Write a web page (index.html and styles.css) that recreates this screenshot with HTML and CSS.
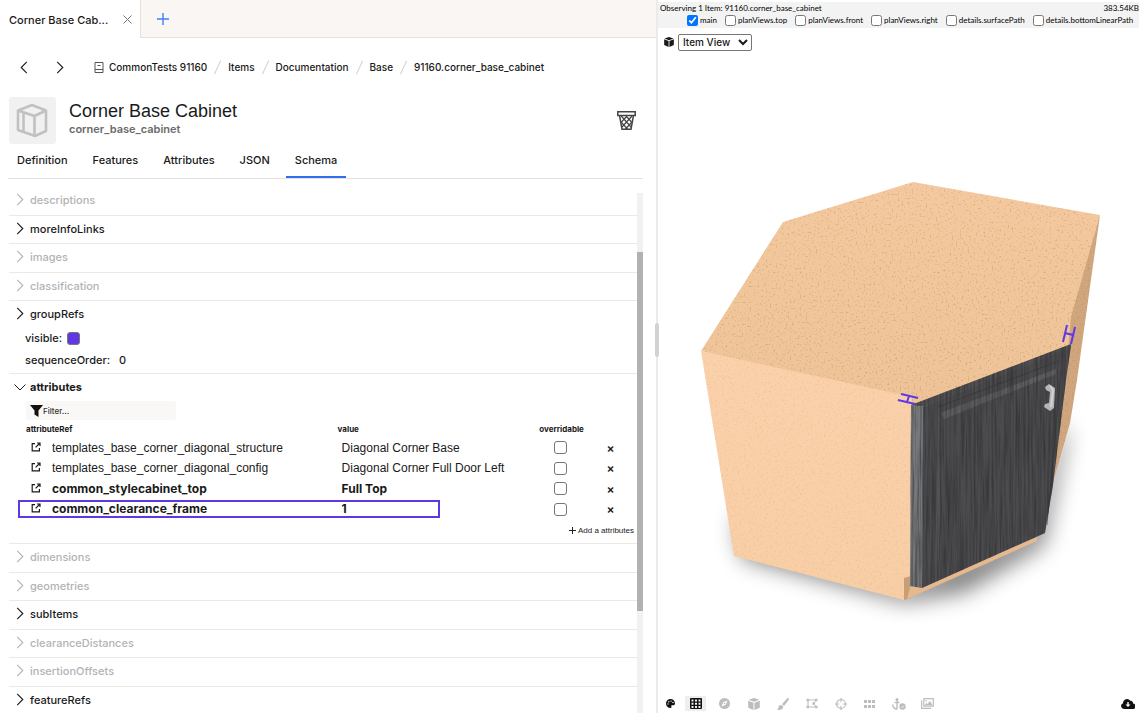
FILE: index.html
```html
<!doctype html>
<html lang="en">

<head>
    <meta charset="utf-8">
    <title>Corner Base Cabinet</title>
    <link rel="stylesheet" href="styles.css">
</head>

<body>

<!-- shared icons -->
<svg width="0" height="0" hidden>
    <symbol id="chevron-right" viewBox="0 0 8 14"><path d="M1 1l6 6-6 6" fill="none" stroke="currentColor" stroke-width="1.200"/></symbol>
    <symbol id="chevron-down" viewBox="0 0 12 7"><path d="M.5.5L6 6 11.500.5" fill="none" stroke="currentColor"/></symbol>
    <symbol id="chevron-left" viewBox="0 0 8 14"><path d="M7 1L1 7l6 6" fill="none" stroke="currentColor" stroke-width="1.200"/></symbol>
    <symbol id="external" viewBox="0 0 10 10"><path d="M4 1.600H1.200v7.200h7.200V6M6 1h3v3M9 1L4.600 5.400" fill="none" stroke="currentColor" stroke-width="1.200"/></symbol>
    <symbol id="cube" viewBox="0 0 12 12"><path d="M6 0l5.400 1.800L6 3.800.6 1.800zM.2 2.700l5.300 2V12L.2 9.700zM11.800 2.700l-5.300 2V12l5.300-2.300z" fill="currentColor"/></symbol>
</svg>

<div class="app">

    <main class="editor">
        <div class="tab-bar">
            <div class="tab">
                <span>Corner Base Cab...</span>
                <button class="icon-btn close" aria-label="Close tab">
                    <svg width="9" height="9" viewBox="0 0 9 9"><path d="M.5.5l8 8M8.500.5l-8 8" stroke="#777"/></svg>
                </button>
            </div>
            <button class="icon-btn new-tab" aria-label="New tab">
                <svg width="12" height="12" viewBox="0 0 12 12"><path d="M6 0v12M0 6h12" stroke="#3b82f6" stroke-width="1.400"/></svg>
            </button>
        </div>

        <nav class="crumbs">
            <button class="icon-btn back" aria-label="Back"><svg width="8" height="13"><use href="#chevron-left"/></svg></button>
            <button class="icon-btn forward" aria-label="Forward"><svg width="8" height="13"><use href="#chevron-right"/></svg></button>
            <svg class="book" width="10" height="11" viewBox="0 0 10 11"><path d="M1 .5h8v10H1zM1 7.500h8M3.500 3.500h3" fill="none" stroke="#555"/></svg>
            <a href="#">CommonTests 91160</a>
            <i></i>
            <a href="#">Items</a>
            <i></i>
            <a href="#">Documentation</a>
            <i></i>
            <a href="#">Base</a>
            <i></i>
            <a href="#">91160.corner_base_cabinet</a>
        </nav>

        <header class="item-header">
            <div class="thumb">
                <svg width="33" height="35" viewBox="0 0 33 35"><path d="M2 7.500L16 2l14 5.500v20.500L19 33 2 27zM2 7.500l16.500 5.500L30 7.500M18.500 13v20M7.500 9.500v19" fill="none" stroke="#c1c1c1" stroke-width="2.600" stroke-linejoin="round"/></svg>
            </div>
            <div class="titles">
                <h1>Corner Base Cabinet</h1>
                <p>corner_base_cabinet</p>
            </div>
            <button class="icon-btn" aria-label="Delete">
                <svg width="19" height="19" viewBox="0 0 19 19" fill="none" stroke="#444"><path d="M.8.8h17.400v3.600H.8zM2.500 4.400L5 18.200h9l2.500-13.800" stroke-width="1.500"/><path d="M4.200 5l9.800 11M9 5l6 6.500M15 5L5 16M10 5l-6 6.500M4.500 11.500l6 6.500M14.500 11.500l-6 6.500" stroke-width="1.200"/></svg>
            </button>
        </header>

        <nav class="item-tabs">
            <a href="#">Definition</a>
            <a href="#">Features</a>
            <a href="#">Attributes</a>
            <a href="#">JSON</a>
            <a href="#" class="active">Schema</a>
        </nav>

        <div class="schema">
            <div class="sections">
                <section class="empty"><h2><svg width="8" height="13"><use href="#chevron-right"/></svg>descriptions</h2></section>
                <section><h2><svg width="8" height="13"><use href="#chevron-right"/></svg>moreInfoLinks</h2></section>
                <section class="empty"><h2><svg width="8" height="13"><use href="#chevron-right"/></svg>images</h2></section>
                <section class="empty"><h2><svg width="8" height="13"><use href="#chevron-right"/></svg>classification</h2></section>
                <section class="open">
                    <h2><svg width="8" height="13"><use href="#chevron-right"/></svg>groupRefs</h2>
                    <div class="field">
                        <label for="visible">visible:</label>
                        <input type="checkbox" id="visible" class="box filled" checked>
                    </div>
                    <div class="field">
                        <span>sequenceOrder:</span>
                        <span class="value">0</span>
                    </div>
                </section>
                <section class="open">
                    <h2 class="expanded"><svg width="12" height="7"><use href="#chevron-down"/></svg>attributes</h2>
                    <div class="attributes">
                        <label class="filter">
                            <svg width="13" height="12" viewBox="0 0 13 12"><path d="M0 0h13L8.500 5.500V12l-4-2.500v-4z" fill="#111"/></svg>
                            <input type="text" placeholder="Filter..." aria-label="Filter">
                        </label>
                        <table>
                            <thead>
                            <tr><th class="col-ref">attributeRef</th><th class="col-value">value</th><th class="col-over">overridable</th><th></th></tr>
                            </thead>
                            <tbody>
                            <tr>
                                <td><svg width="10" height="10"><use href="#external"/></svg>templates_base_corner_diagonal_structure</td>
                                <td>Diagonal Corner Base</td>
                                <td><input type="checkbox" class="box" aria-label="overridable"></td>
                                <td><button class="remove">×</button></td>
                            </tr>
                            <tr>
                                <td><svg width="10" height="10"><use href="#external"/></svg>templates_base_corner_diagonal_config</td>
                                <td>Diagonal Corner Full Door Left</td>
                                <td><input type="checkbox" class="box" aria-label="overridable"></td>
                                <td><button class="remove">×</button></td>
                            </tr>
                            <tr class="own">
                                <td><svg width="10" height="10"><use href="#external"/></svg>common_stylecabinet_top</td>
                                <td>Full Top</td>
                                <td><input type="checkbox" class="box" aria-label="overridable"></td>
                                <td><button class="remove">×</button></td>
                            </tr>
                            <tr class="own marked">
                                <td><svg width="10" height="10"><use href="#external"/></svg>common_clearance_frame</td>
                                <td>1</td>
                                <td><input type="checkbox" class="box" aria-label="overridable"></td>
                                <td><button class="remove">×</button></td>
                            </tr>
                            </tbody>
                        </table>
                        <button class="add"><svg width="7" height="7" viewBox="0 0 7 7"><path d="M3.500 0v7M0 3.500h7" stroke="#222"/></svg>Add a attributes</button>
                    </div>
                </section>
                <section class="empty"><h2><svg width="8" height="13"><use href="#chevron-right"/></svg>dimensions</h2></section>
                <section class="empty"><h2><svg width="8" height="13"><use href="#chevron-right"/></svg>geometries</h2></section>
                <section><h2><svg width="8" height="13"><use href="#chevron-right"/></svg>subItems</h2></section>
                <section class="empty"><h2><svg width="8" height="13"><use href="#chevron-right"/></svg>clearanceDistances</h2></section>
                <section class="empty"><h2><svg width="8" height="13"><use href="#chevron-right"/></svg>insertionOffsets</h2></section>
                <section><h2><svg width="8" height="13"><use href="#chevron-right"/></svg>featureRefs</h2></section>
            </div>
            <div class="scrollbar"><div></div></div>
        </div>
    </main>

    <div class="splitter"><div></div></div>

    <aside class="viewer">
        <div class="observer">
            <div class="observer-info"><span>Observing 1 Item: 91160.corner_base_cabinet</span><span>383.54KB</span></div>
            <div class="layers">
                <label><input type="checkbox" checked>main</label>
                <label><input type="checkbox">planViews.top</label>
                <label><input type="checkbox">planViews.front</label>
                <label><input type="checkbox">planViews.right</label>
                <label><input type="checkbox">details.surfacePath</label>
                <label><input type="checkbox">details.bottomLinearPath</label>
            </div>
        </div>

        <div class="view-select">
            <svg width="10" height="10"><use href="#cube"/></svg>
            <select aria-label="View"><option>Item View</option></select>
        </div>

        <svg class="scene" viewBox="658 54 481 638">
            <defs>
                <linearGradient id="top-fill" x1="0" y1="0" x2="0" y2="1">
                    <stop offset="0" stop-color="#f4c99f"/><stop offset="1" stop-color="#edc397"/>
                </linearGradient>
                <linearGradient id="side-fill" x1="0" y1="0" x2="0" y2="1">
                    <stop offset="0" stop-color="#fad1aa"/><stop offset="1" stop-color="#f8cea7"/>
                </linearGradient>
                <filter id="board" x="0" y="0" width="1" height="1" color-interpolation-filters="sRGB">
                    <feTurbulence type="fractalNoise" baseFrequency=".5" numOctaves="3" seed="4"/>
                    <feColorMatrix values="0 0 0 0 .66  0 0 0 0 .46  0 0 0 0 .28  1.400 0 0 0 -.8" result="grain"/>
                    <feComposite in="grain" in2="SourceAlpha" operator="in" result="cut"/>
                    <feMerge><feMergeNode in="SourceGraphic"/><feMergeNode in="cut"/></feMerge>
                </filter>
                <filter id="board-light" x="0" y="0" width="1" height="1" color-interpolation-filters="sRGB">
                    <feTurbulence type="fractalNoise" baseFrequency=".45" numOctaves="3" seed="9"/>
                    <feColorMatrix values="0 0 0 0 .8  0 0 0 0 .6  0 0 0 0 .4  .8 0 0 0 -.45" result="grain"/>
                    <feComposite in="grain" in2="SourceAlpha" operator="in" result="cut"/>
                    <feMerge><feMergeNode in="SourceGraphic"/><feMergeNode in="cut"/></feMerge>
                </filter>
                <filter id="wood" x="0" y="0" width="1" height="1" color-interpolation-filters="sRGB">
                    <feTurbulence type="fractalNoise" baseFrequency=".5 .015" numOctaves="3" seed="3"/>
                    <feColorMatrix values="0 0 0 0 .17  0 0 0 0 .17  0 0 0 0 .18  1.400 0 0 0 -.5" result="grain"/>
                    <feComposite in="grain" in2="SourceAlpha" operator="in" result="cut"/>
                    <feMerge><feMergeNode in="SourceGraphic"/><feMergeNode in="cut"/></feMerge>
                </filter>
                <filter id="soft" x="-.2" y="-.3" width="1.400" height="1.600"><feGaussianBlur stdDeviation="11"/></filter>
            </defs>

            <path d="M735 515L905 586 1030 530 1062 420 1066 440 1044 545 965 592 905 602 742 558z" fill="#000" opacity=".5" filter="url(#soft)"/>

            <path d="M1100 215L1077 380 1070 423 1045 510V440L1062 330z" fill="#d0a67e" filter="url(#board)"/>
            <path d="M913 182L1100 215 1071 317 1068 349 918 408 701 351 783 222z" fill="url(#top-fill)" filter="url(#board)"/>
            <path d="M701 351L912 397 911 598 904 600 734 556z" fill="url(#side-fill)" filter="url(#board-light)"/>
            <path d="M904 578l7-2v22l-7 2z" fill="#c89e74"/>
            <path d="M910 587l127-50v4L907 599z" fill="#e5b98d"/>

            <!-- door -->
            <g filter="url(#wood)">
                <path d="M911 405l13 2-2 181-12-2z" fill="#77787b"/>
                <path d="M923 407L1071 346 1066 380 1053 485 1045 533 922 588z" fill="#4b4b4e"/>
                <path d="M911 405L1071 344v4L924 407z" fill="#505053"/>
                <path d="M940 413L1056 369 1056 374 944 419z" fill="#5e5e61"/>
                <path d="M938 414l4 6-4 160h-3z" fill="#525255"/>
            </g>
            <path d="M938 407L1059 361M1061 370l-14 155" fill="none" stroke="#2c2d30" opacity=".5"/>

            <!-- handle -->
            <path d="M1045 387l4-3 6 4-1 20-4 3-6-4 1-3 4-1 1-11-4-2z" fill="#b4b5b6"/>
            <path d="M1050 386l3 4-2 17" fill="none" stroke="#d2d2d2" stroke-width="2"/>

            <!-- clearance markers -->
            <g fill="none" stroke="#5f37e3" stroke-width="2">
                <path d="M1067 325l-4 17M1075 327l-4 17M1065 333l8 2"/>
                <path d="M901 394l17 4M898 400l17 4M909 396l-2 6"/>
            </g>
        </svg>

        <div class="tools">
            <button aria-label="Materials" class="on materials"><svg width="9" height="9" viewBox="0 0 16 16"><path fill-rule="evenodd" d="M8 0a8 8 0 100 16c2 0 2-1.500 1.500-2.500C9 12 9.500 11 11 11h2.500C15 11 16 9.500 16 8a8 8 0 00-8-8zM3.500 7.500a1.200 1.200 0 110 2.400 1.200 1.200 0 010-2.400zM5 3.500A1.200 1.200 0 115 6a1.200 1.200 0 010-2.500zM9 2.500A1.200 1.200 0 119 5a1.200 1.200 0 010-2.500zM12.500 5a1.200 1.200 0 110 2.500 1.200 1.200 0 010-2.500z"/></svg></button>
            <button aria-label="Grid" class="on selected"><svg width="12" height="11" viewBox="0 0 12 11"><path fill-rule="evenodd" d="M1 0h10a1 1 0 011 1v9a1 1 0 01-1 1H1a1 1 0 01-1-1V1a1 1 0 011-1zm.5 1.500v2h2v-2zm3.500 0v2h2v-2zm3.500 0v2h2v-2zm-7 3.200v2h2v-2zm3.500 0v2h2v-2zm3.500 0v2h2v-2zm-7 3.200v2h2v-2zm3.500 0v2h2v-2zm3.500 0v2h2v-2z"/></svg></button>
            <button aria-label="Compass"><svg width="11" height="11" viewBox="0 0 11 11"><path fill-rule="evenodd" d="M5.500 0a5.500 5.500 0 100 11 5.500 5.500 0 000-11zM8.500 2.500L6.800 6.800 2.500 8.500l1.700-4.300zM5.500 4.700a.8.8 0 100 1.600.8.8 0 000-1.600z"/></svg></button>
            <button aria-label="Box"><svg width="12" height="12"><use href="#cube"/></svg></button>
            <button aria-label="Brush"><svg width="12" height="12" viewBox="0 0 12 12"><path d="M11.500.2c.8.500.5 1.300.1 1.900L7 8 5 6.300 10 .6c.5-.5 1-.7 1.500-.4zM4.300 7l2 1.800C6.300 11 4 12.500 0 11.700c1.500-.5 1-1.700 1.600-3C2 7.500 3.200 6.800 4.300 7z"/></svg></button>
            <button aria-label="Polygon"><svg width="12" height="11" viewBox="0 0 12 11"><path d="M1.500 2h9L7.500 5.500l3 3.500h-9M2 2v7" fill="none" stroke="currentColor"/><path d="M.5.8h2.500v2.400H.5zM9 .8h2.500v2.400H9zM.5 7.800h2.500v2.400H.5zM9 7.800h2.500v2.400H9zM6.500 4.300H9v2.400H6.500z"/></svg></button>
            <button aria-label="Target"><svg width="12" height="12" viewBox="0 0 12 12"><path d="M6 1.500a4.500 4.500 0 100 9 4.500 4.500 0 000-9zM6 0v4M6 8v4M0 6h4M8 6h4" fill="none" stroke="currentColor" stroke-width="1.200"/></svg></button>
            <button aria-label="Grip"><svg width="11" height="8" viewBox="0 0 11 8"><path d="M0 0h3v3H0zM4 0h3v3H4zM8 0h3v3H8zM0 5h3v3H0zM4 5h3v3H4zM8 5h3v3H8z"/></svg></button>
            <button aria-label="Anchor"><svg width="14" height="12" viewBox="0 0 14 12"><path d="M5 1v9.500M2.500 4.500h5M.7 6.500c0 3 2 4.500 4.800 4.500" fill="none" stroke="currentColor" stroke-width="1.400"/><circle cx="5" cy="1.600" r="1.500"/><circle cx="10.500" cy="8.500" r="3.200"/><path d="M9 8.500l1.200 1.200L12.200 7.500" fill="none" stroke="#fff" stroke-width=".8"/></svg></button>
            <button aria-label="Images"><svg width="13" height="11" viewBox="0 0 13 11"><path d="M.6 2.500v7.800h9.500M2.800.7h9.500v7.400H2.800z" fill="none" stroke="currentColor" stroke-width="1.200"/><path d="M3.500 7.300l2-2.300 1 1L9 3l2.500 4.300zM5 2a.8.8 0 110 1.600A.8.8 0 015 2z"/></svg></button>
            <button aria-label="Download" class="on download"><svg width="14" height="11" viewBox="0 0 14 11"><path fill-rule="evenodd" d="M3 11a3 3 0 01-1-5.800A4 4 0 019.300 2.700 2.400 2.400 0 0112 5.400 2.800 2.800 0 0111.200 11zM6.300 4v2.500H4.500L7 9l2.500-2.500H7.700V4z"/></svg></button>
        </div>
    </aside>

</div>

</body>

</html>
```

FILE: styles.css
```css
*,
*::after {
    box-sizing: border-box;
}

html,
body {
    height: 100%;
    margin: 0;
    padding: 0;
    overflow: hidden;
    background: #fff;
    color: #1a1a1a;
    font-family: Inter, "Liberation Sans", sans-serif;
    font-size: 11px;
}

a {
    color: inherit;
    text-decoration: none;
}

button,
input,
select {
    font-family: inherit;
    color: inherit;
}

button {
    border: 0;
    padding: 0;
    background: none;
}

svg {
    display: block;
    flex: none;
}

h1,
h2,
p {
    margin: 0;
}

.app {
    display: flex;
    height: 100vh;
}

/* editor */

.editor {
    flex: 656;
    min-width: 0;
    display: flex;
    flex-direction: column;
}

.tab-bar {
    display: flex;
    height: 38px;
    flex: none;
    background: #faf6f3;
}

.tab {
    width: 141px;
    padding: 1px 8px 0 9px;
    display: flex;
    align-items: center;
    justify-content: space-between;
    background: #fff;
    border-right: 1px solid #eadfd9;
    font-weight: 500;
}

.new-tab {
    flex: 1;
    padding-left: 16px;
    border-bottom: 1px solid #eadfd9;
}

.crumbs {
    display: flex;
    align-items: center;
    flex: none;
    height: 59px;
    padding: 0 0 1px 20px;
    font-weight: 500;
    font-size: 10px;
}

.forward {
    margin-left: 28px;
}

.book {
    margin: 0 5px 0 30px;
}

.crumbs i {
    width: 1px;
    height: 15px;
    margin: 0 10px;
    background: #dccfc8;
    transform: rotate(25deg);
}

.item-header {
    display: flex;
    align-items: center;
    flex: none;
    padding: 0 20px 0 9px;
}

.thumb {
    width: 47px;
    height: 47px;
    display: flex;
    align-items: center;
    justify-content: center;
    background: #f1f1f1;
    border-radius: 3px;
}

.titles {
    flex: 1;
    padding: 0 0 4px 13px;
}

.titles h1 {
    font-family: "Liberation Sans", sans-serif;
    font-size: 18px;
    line-height: 22px;
    font-weight: 400;
}

.titles p {
    font-size: 11px;
    line-height: 15px;
    font-weight: 600;
    color: #6b6b6b;
}

.item-tabs {
    display: flex;
    gap: 7px;
    flex: none;
    height: 35px;
    margin: 0 13px 0 8px;
    border-bottom: 1px solid #eadfd9;
}

.item-tabs a {
    height: 34px;
    padding: 0 9px;
    line-height: 33px;
    font-weight: 500;
}

.item-tabs .active {
    border-bottom: 2px solid #2f6fed;
}

.schema {
    flex: 1;
    min-height: 0;
    display: flex;
    padding: 8px 13px 0 9px;
}

.sections {
    flex: 1;
    overflow: hidden;
}

.sections section {
    height: 28px;
    border-bottom: 1px solid #efe7e2;
}

.sections section:nth-child(odd) {
    height: 29px;
}

.sections section.open {
    height: auto;
    padding-bottom: 2px;
}

.sections h2 {
    display: flex;
    align-items: center;
    gap: 6px;
    height: 25px;
    padding-left: 7px;
    font-size: 11px;
    font-weight: 500;
}

.sections .empty h2 {
    color: #b3b3b3;
}

.sections .open h2 {
    margin-bottom: 1px;
}

.sections h2.expanded {
    gap: 4px;
    padding-left: 5px;
    height: 26px;
    font-weight: 700;
}

.field {
    display: flex;
    align-items: center;
    gap: 5px;
    height: 22px;
    padding-left: 16px;
    font-weight: 500;
}

.field .value {
    padding-left: 4px;
}

.box {
    appearance: none;
    display: block;
    width: 13px;
    height: 13px;
    margin: 0;
    border: 1px solid #777;
    border-radius: 3px;
    background: #fff;
}

.box.filled {
    background: #5f37e3;
}

.attributes {
    padding-left: 17px;
}

.filter {
    display: flex;
    align-items: center;
    width: 150px;
    height: 19px;
    padding-left: 4px;
    background: #faf8f7;
    border-radius: 3px;
}

.filter input {
    width: 100%;
    padding: 0;
    border: 0;
    background: none;
    font-size: 8px;
    font-weight: 500;
}

.filter input::placeholder {
    color: #333;
}

table {
    width: 100%;
    table-layout: fixed;
    border-collapse: collapse;
}

th {
    height: 17px;
    padding: 0;
    text-align: left;
    font-size: 8px;
    font-weight: 700;
    white-space: nowrap;
}

.col-ref {
    width: 51%;
}

.col-value {
    width: 33%;
}

.col-over {
    width: 7%;
}

tbody tr {
    height: 21px;
}

tbody tr:nth-child(even) {
    height: 20px;
}

td {
    padding: 0;
    font-family: "Liberation Sans", sans-serif;
    font-size: 12px;
    line-height: 16px;
    white-space: nowrap;
}

td svg {
    display: inline-block;
    margin: 0 11px 0 5px;
}

td:nth-child(2) {
    padding-left: 4px;
}

td:nth-child(3) .box {
    margin: 0 auto;
}

td:last-child {
    padding-left: 2px;
    text-align: center;
}

.own td {
    font-family: inherit;
    font-weight: 700;
}

.marked {
    position: relative;
}

/* frame over the highlighted row */
.marked td:first-child::after {
    content: "";
    position: absolute;
    top: 1px;
    bottom: 1px;
    left: -8px;
    width: 422px;
    border: 2px solid #5f37e3;
}

.remove {
    display: block;
    margin: 0 auto;
    font-family: Inter, sans-serif;
    font-size: 12px;
    line-height: 16px;
    font-weight: 600;
}

.add {
    display: flex;
    align-items: center;
    gap: 2px;
    height: 22px;
    margin: 0 3px 0 auto;
    font-family: "Liberation Sans", sans-serif;
    font-size: 8px;
}

.scrollbar {
    display: flow-root;
    width: 6px;
    margin-top: 6px;
    background: #f1f1f1;
}

.scrollbar div {
    height: 69%;
    margin-top: 59px;
    background: #b1b1b1;
}

/* splitter */

.splitter {
    width: 2px;
    display: flex;
    align-items: center;
    background: #eeeae8;
}

.splitter div {
    flex: none;
    width: 4px;
    height: 34px;
    margin: -34px 0 0 -1px;
    border-radius: 2px;
    background: #d2d2d2;
}

/* viewer */

.viewer {
    flex: 481;
    min-width: 0;
    padding-top: 2px;
    display: flex;
    flex-direction: column;
}

.observer {
    flex: none;
    height: 26px;
    background: #f3f3f3;
    color: #000;
    font-family: Lato, sans-serif;
    font-size: 8px;
    line-height: 12px;
    white-space: nowrap;
}

.observer-info {
    display: flex;
    justify-content: space-between;
    padding-left: 2px;
}

.layers {
    display: flex;
    gap: 8px;
    padding-left: 29px;
}

.layers label {
    display: flex;
    align-items: center;
    gap: 2px;
}

.layers input {
    width: 11px;
    height: 11px;
    margin: 0;
}

.view-select {
    flex: none;
    display: flex;
    align-items: center;
    gap: 4px;
    height: 26px;
    padding: 2px 0 0 6px;
}

.view-select select {
    width: 74px;
    height: 17px;
    padding: 0;
    border: 1px solid #777;
    border-radius: 2px;
    background: #fff;
    font-size: 10px;
    font-weight: 500;
}

.scene {
    flex: 1;
    min-height: 0;
    width: 100%;
}

.tools {
    flex: none;
    display: flex;
    align-items: center;
    gap: 8px;
    height: 21px;
    padding: 2px 4px 0 6px;
}

.tools button {
    width: 21px;
    height: 15px;
    display: flex;
    align-items: center;
    justify-content: center;
    color: #bdbdbd;
}

.tools svg {
    fill: currentColor;
}

.tools .on {
    color: #111;
}

.tools .materials {
    width: 13px;
}

.tools .selected {
    background: #eee;
}

.tools .download {
    width: 14px;
    margin-left: auto;
}
```
